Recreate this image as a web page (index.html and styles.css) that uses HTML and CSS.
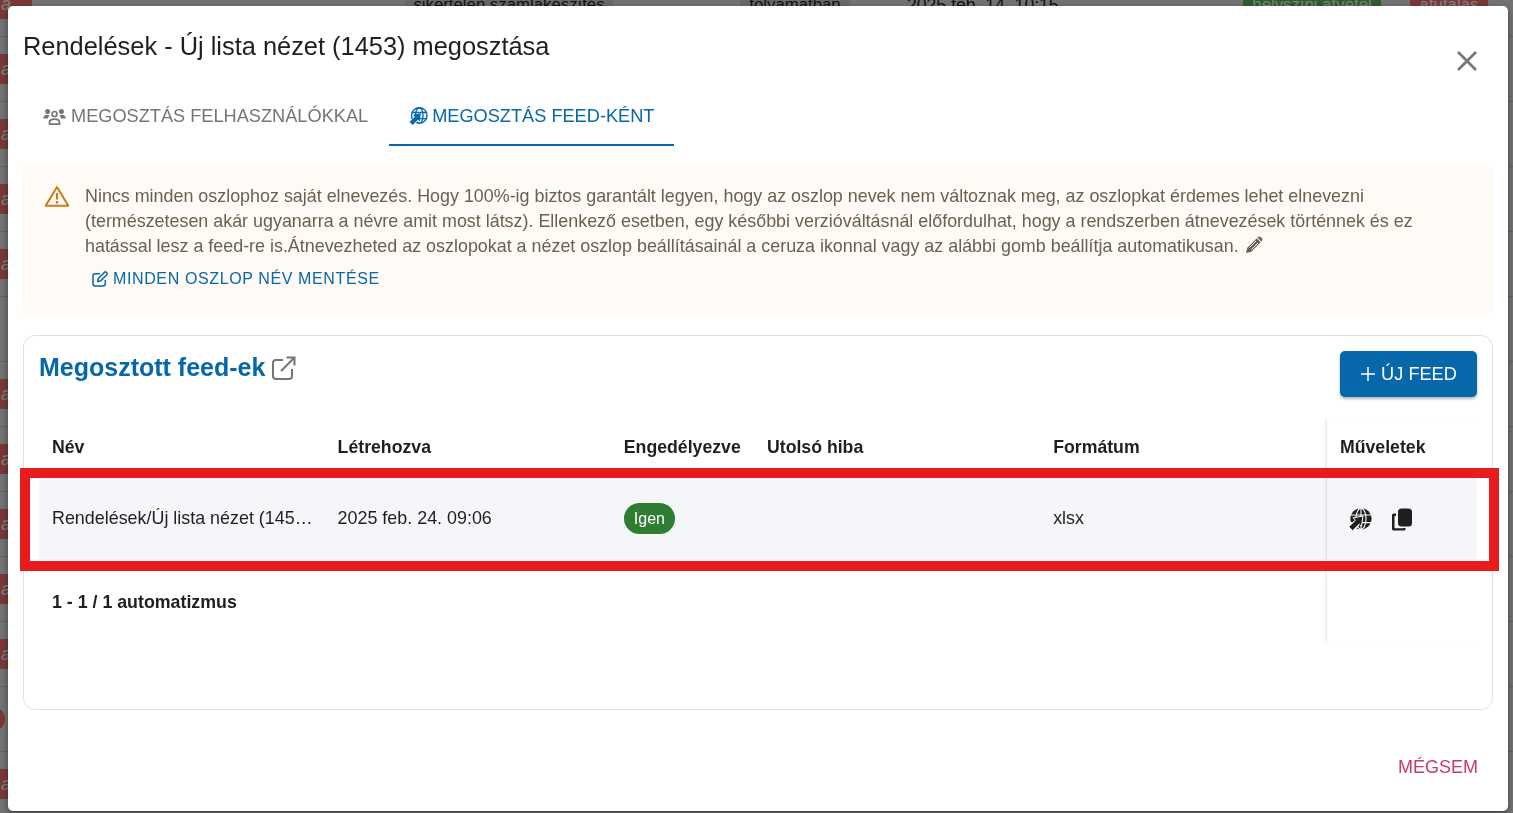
FILE: index.html
```html
<!DOCTYPE html>
<html lang="hu">
<head>
    <meta charset="UTF-8">
    <title>Rendelések - megosztás</title>
    <link rel="stylesheet" href="styles.css">
</head>
<body>
    <svg class="icon-defs" width="0" height="0">
        <symbol id="globe-arrow" viewBox="0 0 24 24">
            <circle cx="13" cy="10.8" r="10.6" fill="currentColor"/>
            <g fill="none" stroke="#fff" stroke-width="1.1">
                <ellipse cx="13" cy="10.8" rx="5" ry="10.6"/>
                <path d="M3 7h20M3 14.6h20M13 0v22"/>
            </g>
            <path d="M0 24 9 15" stroke="#fff" stroke-width="7"/>
            <path d="M15 8 5 9.800l2.400 2.400L.8 18.800l3.900 3.900 6.600-6.600 2.200 2.200z" fill="currentColor" stroke="#fff" stroke-width="1"/>
        </symbol>
        <symbol id="globe-arrow-thin" viewBox="0 0 24 24">
            <g fill="none" stroke="currentColor" stroke-width="1.700">
                <circle cx="13" cy="10.800" r="9.800"/>
                <ellipse cx="13" cy="10.800" rx="4.800" ry="9.800"/>
                <path d="M3 7h20M3 14.600h20"/>
            </g>
            <path d="M0 24 9 15" stroke="#fff" stroke-width="7"/>
            <path d="M15 8 5 9.800l2.400 2.400L.8 18.800l3.900 3.900 6.600-6.600 2.200 2.200z" fill="currentColor"/>
        </symbol>
    </svg>

    <!-- the list page behind the dialog -->
    <div class="backdrop-page">
        <div class="bg-row bg-row-top">
            <span class="bg-badge">a</span>
            <span class="bg-chip bg-chip-gray">sikertelen számlakészítés</span>
            <span class="bg-chip bg-chip-gray">folyamatban</span>
            <span class="bg-date">2025 feb. 14. 10:15</span>
            <span class="bg-chip bg-chip-green">helyszíni átvétel</span>
            <span class="bg-chip bg-chip-red">átutalás</span>
        </div>
        <div class="bg-row"><span class="bg-badge">a</span></div>
        <div class="bg-row"><span class="bg-badge">a</span></div>
        <div class="bg-row"><span class="bg-badge">a</span></div>
        <div class="bg-row"><span class="bg-badge">a</span></div>
        <div class="bg-row"></div>
        <div class="bg-row"><span class="bg-badge">a</span></div>
        <div class="bg-row"><span class="bg-badge">a</span></div>
        <div class="bg-row"><span class="bg-badge">a</span></div>
        <div class="bg-row"><span class="bg-badge">a</span></div>
        <div class="bg-row"><span class="bg-badge">a</span></div>
        <div class="bg-row"><span class="bg-dot"></span></div>
        <div class="bg-row"><span class="bg-badge">a</span></div>
    </div>
    <div class="backdrop"></div>

    <div class="modal">
        <div class="modal-header">
            <h2 class="modal-title">Rendelések - Új lista nézet (1453) megosztása</h2>
            <button class="close-btn" aria-label="Bezárás">
                <svg width="22" height="22" viewBox="0 0 22 22"><path d="M2 2l18 18M20 2 2 20" stroke="currentColor" stroke-width="2.6" fill="none"/></svg>
            </button>
        </div>

        <div class="tabs">
            <div class="tab tab-users">
                <svg class="tab-icon" width="23" height="17" viewBox="0 0 23 17" fill="currentColor">
                    <circle cx="4.6" cy="3.4" r="2.5"/>
                    <circle cx="18.4" cy="3.4" r="2.5"/>
                    <path d="M.3 10.6C.3 8 2 6.8 4.2 6.8c1 0 1.800.3 2.400.8-1 .8-1.500 1.900-1.600 3zM22.700 10.600c0-2.600-1.700-3.800-3.900-3.800-1 0-1.800.3-2.400.8 1 .8 1.500 1.900 1.600 3z"/>
                    <circle cx="11.500" cy="6" r="2.500" fill="none" stroke="currentColor" stroke-width="1.700"/>
                    <path d="M6.500 16.200v-1.700c0-2.200 1.800-3.400 5-3.400s5 1.200 5 3.400v1.700z" fill="none" stroke="currentColor" stroke-width="1.700"/>
                </svg>
                Megosztás felhasználókkal
            </div>
            <div class="tab tab-active">
                <svg class="tab-icon" width="19" height="19"><use href="#globe-arrow-thin"/></svg>
                Megosztás feed-ként
            </div>
        </div>

        <div class="alert">
            <svg class="alert-icon" width="26" height="22" viewBox="0 0 26 22">
                <path d="M13 2 1.700 20.800h22.600z" fill="none" stroke="#cc7a1e" stroke-width="2" stroke-linejoin="round"/>
                <path d="M13 8v6.500M13 16v2.400" stroke="#cc7a1e" stroke-width="2.200" fill="none"/>
            </svg>
            <div class="alert-body">
                <p class="alert-text">Nincs minden oszlophoz saját elnevezés. Hogy 100%-ig biztos garantált legyen, hogy az oszlop nevek nem változnak meg, az oszlopkat érdemes lehet elnevezni (természetesen akár ugyanarra a névre amit most látsz). Ellenkező esetben, egy későbbi verzióváltásnál előfordulhat, hogy a rendszerben átnevezések történnek és ez hatással lesz a feed-re is.Átnevezheted az oszlopokat a nézet oszlop beállításainál a ceruza ikonnal vagy az alábbi gomb beállítja automatikusan.
                    <svg class="pencil-icon" width="18" height="18" viewBox="0 0 18 18">
                        <path d="M1 17l1.300-5.200L11.800 2.300l3.900 3.900-9.500 9.500z" fill="currentColor"/>
                        <path d="M13 1.100c.8-.8 2-.8 2.700 0l1.200 1.200c.7.700.7 1.900 0 2.700l-.5.500-3.900-3.900z" fill="currentColor"/>
                        <path d="M11 5 4.500 11.500M13 7l-6.500 6.500" stroke="#fffaf5" stroke-width="1"/>
                    </svg>
                </p>
                <button class="save-names">
                    <svg width="16" height="16" viewBox="0 0 16 16" fill="none" stroke="currentColor" stroke-width="1.500">
                        <path d="M8 2.700H3.200C2 2.700 1 3.700 1 4.900v7.900C1 14 2 15 3.200 15h7.900c1.200 0 2.200-1 2.200-2.200V9"/>
                        <path d="M5.700 10.500l.6-3L12.500 1.300c.5-.5 1.200-.5 1.700 0l.7.7c.5.500.5 1.200 0 1.700L8.700 9.900z"/>
                    </svg>
                    Minden oszlop név mentése
                </button>
            </div>
        </div>

        <div class="card">
            <div class="card-head">
                <h3 class="card-title">Megosztott feed-ek
                    <svg class="external-icon" width="24" height="24" viewBox="0 0 24 24" fill="none" stroke="currentColor" stroke-width="2">
                        <path d="M11 4H4C2.300 4 1 5.300 1 7v13c0 1.700 1.300 3 3 3h13c1.700 0 3-1.300 3-3v-7"/>
                        <path d="M9 15 22 2M14.500 1.500h8v8"/>
                    </svg>
                </h3>
                <button class="new-feed">
                    <svg width="16" height="16" viewBox="0 0 16 16"><path d="M8 1v14M1 8h14" stroke="currentColor" stroke-width="1.500"/></svg>
                    Új feed
                </button>
            </div>

            <table class="feed-table">
                <thead>
                    <tr>
                        <th class="col-first">Név</th>
                        <th class="col-wide">Létrehozva</th>
                        <th class="col-narrow">Engedélyezve</th>
                        <th class="col-wide">Utolsó hiba</th>
                        <th class="col-format">Formátum</th>
                        <th class="col-actions">Műveletek</th>
                    </tr>
                </thead>
                <tbody>
                    <tr class="feed-row">
                        <td class="cell-name"><div class="cell-clip">Rendelések/Új lista nézet (1453) feed</div></td>
                        <td>2025 feb. 24. 09:06</td>
                        <td><span class="pill">Igen</span></td>
                        <td></td>
                        <td>xlsx</td>
                        <td class="col-actions">
                            <div class="row-actions">
                                <svg class="row-icon" width="24" height="24"><use href="#globe-arrow"/></svg>
                                <svg class="row-icon" width="22" height="23" viewBox="0 0 22 23" fill="currentColor">
                                    <rect x="7" y="0.500" width="14" height="18" rx="3.500"/>
                                    <path d="M5 5.500H2.800C1.700 5.500 1 6.300 1 7.300v13.400c0 1 .7 1.800 1.800 1.800h10c1 0 1.800-.8 1.800-1.800v-.7H12v.2H3.500V8H5z"/>
                                </svg>
                            </div>
                        </td>
                    </tr>
                </tbody>
                <tfoot>
                    <tr>
                        <td colspan="5" class="table-count">1 - 1 / 1 automatizmus</td>
                        <td class="col-actions"></td>
                    </tr>
                </tfoot>
            </table>
        </div>

        <div class="modal-footer">
            <button class="cancel-btn">Mégsem</button>
        </div>
    </div>

    <div class="highlight-box"></div>
</body>
</html>
```

FILE: styles.css
```css
* {
    margin: 0;
    padding: 0;
    box-sizing: border-box;
}

body {
    font-family: "Liberation Sans", Arial, sans-serif;
    height: 100vh;
    overflow: hidden;
    background: #e4e4e4;
    color: #1f1f1f;
}

button {
    font: inherit;
    background: none;
    border: 0;
    cursor: pointer;
}

.icon-defs {
    position: absolute;
}

/* page behind the dialog */
.backdrop-page {
    position: absolute;
    top: -28px;
    left: 0;
    width: 100%;
}

.bg-row {
    height: 65px;
    border-bottom: 1px solid #c4c4c4;
    display: flex;
    align-items: center;
    position: relative;
    font-size: 16.8px;
}

.bg-badge {
    width: 32px;
    height: 30px;
    padding-left: 1px;
    line-height: 30px;
    background: #f07070;
    color: #fff;
    font-style: italic;
    font-size: 18px;
}

.bg-dot {
    width: 24px;
    height: 24px;
    margin-left: -19px;
    border-radius: 50%;
    background: #f07070;
}

.bg-chip {
    position: absolute;
    top: 18px;
    height: 30px;
    line-height: 30px;
    border-radius: 12px;
    text-align: center;
    white-space: nowrap;
}

.bg-chip-gray {
    background: #d0d0d0;
}

.bg-row-top .bg-chip-gray:nth-child(2) {
    left: 405px;
    width: 208px;
}

.bg-row-top .bg-chip-gray:nth-child(3) {
    left: 740px;
    width: 110px;
}

.bg-date {
    position: absolute;
    left: 907px;
    top: 23px;
    font-size: 17.6px;
}

.bg-chip-green {
    left: 1243px;
    width: 138px;
    background: #5cb85c;
    color: #fff;
}

.bg-chip-red {
    left: 1410px;
    width: 78px;
    background: #f07070;
    color: #fff;
}

.backdrop {
    position: fixed;
    top: 0;
    left: 0;
    width: 100%;
    height: 100%;
    background: rgba(0, 0, 0, 0.5);
}

/* dialog */
.modal {
    position: absolute;
    top: 6px;
    left: 8px;
    width: 1500px;
    height: 805px;
    padding: 0 15px;
    background: #fff;
    border-radius: 5px;
    box-shadow: 0 3px 6px rgba(0, 0, 0, 0.4);
}

.modal-header {
    height: 80px;
    padding-top: 25px;
    display: flex;
    justify-content: space-between;
}

.modal-title {
    font-size: 25.4px;
    font-weight: 400;
    line-height: 30px;
}

.close-btn {
    width: 22px;
    height: 22px;
    margin: 19px 15px 0 0;
    color: #757575;
}

.tabs {
    display: flex;
    height: 60px;
    margin-bottom: 19px;
}

.tab {
    display: flex;
    align-items: center;
    gap: 5px;
    padding: 2px 20px 0;
    border-bottom: 2px solid transparent;
    font-size: 18.2px;
    text-transform: uppercase;
    color: #757575;
}

.tab-users {
    padding-right: 21px;
}

.tab-active {
    gap: 4px;
    color: #0767ab;
    border-bottom-color: #0767ab;
}

.tab-icon {
    flex-shrink: 0;
}

/* warning */
.alert {
    display: flex;
    gap: 15px;
    height: 150px;
    padding: 19px 20px 0 21px;
    background: #fffaf5;
    border-radius: 5px;
}

.alert-icon {
    flex-shrink: 0;
    margin-top: 1px;
}

.alert-text {
    font-size: 17.9px;
    line-height: 25px;
    color: #6c5f50;
}

.pencil-icon {
    vertical-align: -2px;
    margin-left: 1px;
}

.save-names {
    display: flex;
    align-items: center;
    gap: 5px;
    height: 24px;
    margin: 8px 0 0 7px;
    font-size: 16px;
    letter-spacing: 0.62px;
    text-transform: uppercase;
    color: #0767ab;
}

/* feed card */
.card {
    height: 375px;
    margin-top: 20px;
    padding: 15px;
    border: 1px solid #e0e0e0;
    border-radius: 12px;
}

.card-head {
    display: flex;
    justify-content: space-between;
    align-items: flex-start;
    height: 67px;
}

.card-title {
    font-size: 25px;
    line-height: 33px;
    color: #0767ab;
}

.external-icon {
    color: #757575;
    vertical-align: -4px;
}

.new-feed {
    display: flex;
    align-items: center;
    justify-content: center;
    gap: 5px;
    width: 137px;
    height: 46px;
    border-radius: 5px;
    background: #0767ab;
    color: #fff;
    font-size: 18.2px;
    text-transform: uppercase;
    box-shadow: 0 2px 3px rgba(0, 0, 0, 0.3);
}

.feed-table {
    width: 1438px;
    table-layout: fixed;
    border-collapse: separate;
    border-spacing: 0;
    font-size: 17.9px;
}

.feed-table th {
    height: 58px;
    padding: 0 13px;
    text-align: left;
    font-size: 17.7px;
}

.feed-table td {
    padding: 0 13px;
}

.col-first {
    width: 285.6px;
}

.col-wide {
    width: 286.2px;
}

.col-format {
    width: 286.8px;
}

.col-narrow {
    width: 143.2px;
}

.col-actions {
    width: 150px;
    box-shadow: -2px 0 2px -1px rgba(0, 0, 0, 0.12);
}

.feed-row td {
    height: 84px;
    background: #f4f6fa;
}

.feed-table .cell-name {
    padding-right: 10px;
}

.cell-clip {
    overflow: hidden;
    white-space: nowrap;
    text-overflow: ellipsis;
}

.pill {
    display: inline-block;
    padding: 0 10px;
    line-height: 31px;
    border-radius: 16px;
    background: #2e7d32;
    color: #fff;
    font-size: 16px;
}

.row-actions {
    display: flex;
    align-items: center;
    gap: 19px;
    padding: 3px 0 0 8px;
}

.row-icon {
    color: #1f1f1f;
}

.feed-table tfoot td {
    height: 84px;
}

.feed-table .table-count {
    font-weight: 700;
    font-size: 17.8px;
}

.modal-footer {
    display: flex;
    justify-content: flex-end;
    margin-top: 47px;
    padding-right: 15px;
}

.cancel-btn {
    font-size: 18px;
    text-transform: uppercase;
    color: #c93a6a;
}

/* red annotation over the row */
.highlight-box {
    position: absolute;
    top: 468px;
    left: 20px;
    width: 1479px;
    height: 103px;
    border: 10px solid #e91c1c;
}
```
